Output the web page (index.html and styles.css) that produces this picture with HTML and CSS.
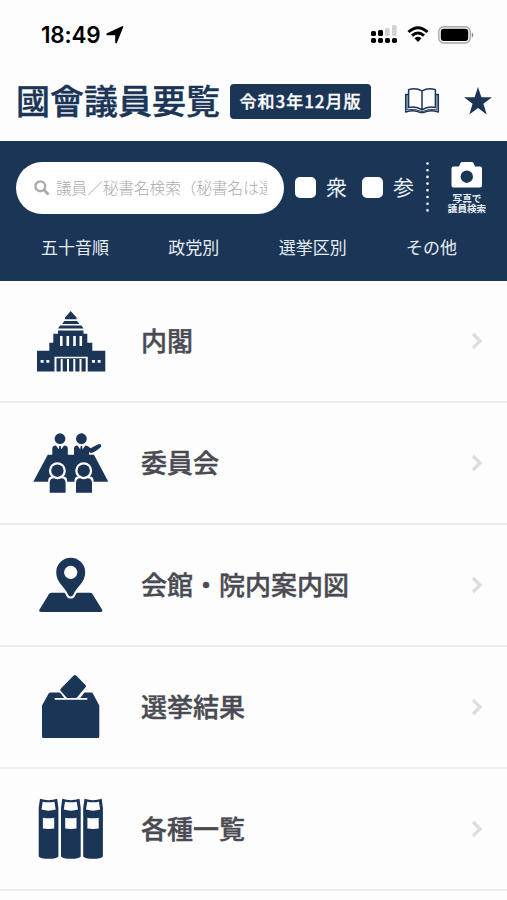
FILE: index.html
```html
<!DOCTYPE html>
<html lang="ja">
<head>
    <meta charset="UTF-8">
    <meta name="viewport" content="width=device-width, initial-scale=1.0">
    <title>國會議員要覧</title>
    <link rel="stylesheet" href="styles.css">
</head>
<body>

    <div class="status-bar">
        <span class="time">18:49</span>
        <svg class="location" width="18" height="18" viewBox="0 0 18 18"><path d="M17.300 1L10.800 17Q9.800 18 9.200 16.600V9.200H1.200Q-.4 8.400 1 7.200L16 .2Q17.800 0 17.300 1z"/></svg>
        <svg class="signal" width="27" height="19" viewBox="0 0 27 19">
            <g fill="#000">
                <rect x="0" y="6" width="5" height="5" rx="1.6"/><rect x="7" y="5" width="5" height="6" rx="1.6"/>
                <rect x="0" y="13" width="5" height="5" rx="1.8"/><rect x="7" y="13" width="5" height="5" rx="1.8"/>
                <rect x="14" y="13" width="5" height="5" rx="1.8"/><rect x="21" y="13" width="5" height="5" rx="1.8"/>
            </g>
            <g fill="#d2d2d2"><rect x="14" y="3" width="4.6" height="8" rx="1.2"/><rect x="21" y="0" width="4.6" height="11" rx="1.2"/></g>
        </svg>
        <svg class="wifi" width="22" height="17" viewBox="0 0 22 17">
            <path d="M1.5 6Q11-2.6 20.5 6M5 9.7Q11 4.4 17 9.7" fill="none" stroke="#000" stroke-width="3"/>
            <path d="M7.5 12.2Q11 9.4 14.5 12.2L11 16z"/>
        </svg>
        <svg class="battery" width="36" height="18" viewBox="0 0 36 18">
            <rect x=".8" y=".8" width="31.4" height="16.2" rx="5" fill="none" stroke="#a5a5a5" stroke-width="1.4"/>
            <rect x="2.8" y="2.8" width="27.4" height="12.2" rx="3"/>
            <path d="M33.8 6.2Q37 9 33.8 11.8z" fill="#888"/>
        </svg>
    </div>

    <div class="header">
        <h1>國會議員要覧</h1>
        <span class="edition">令和3年12月版</span>
        <svg class="book" width="36" height="28" viewBox="0 0 36 28" fill="none" stroke="#1b3557" stroke-width="1.5" stroke-linejoin="round">
            <path d="M18 3.800Q11.500.2 4.600 2.600V20.500Q12 18.600 18 22.800Q24 18.600 31.400 20.500V2.600Q24.500.2 18 3.800V22.800"/>
            <path d="M4.600 7.500H1.700V25Q10 22.300 16 25.400H20Q26 22.300 34.300 25V7.500H31.400"/>
            <path d="M3 8V22.800Q11 21 18 24.600Q25 21 33 22.800V8" stroke-width=".9"/>
        </svg>
        <svg class="star" width="28" height="28" viewBox="0 0 28 28"><path d="M14 0L17.400 10.300H28L19.400 16.700L22.700 27.500L14 21L5.300 27.500L8.600 16.700L0 10.300H10.600z"/></svg>
    </div>

    <div class="panel">
        <div class="search-row">
            <div class="search-box">
                <svg width="16" height="16" viewBox="0 0 16 16" fill="none" stroke="#aaa"><circle cx="6.300" cy="6.300" r="4.900" stroke-width="2.400"/><path d="M10 10L14.600 14.600" stroke-width="2.800"/></svg>
                <span class="placeholder">議員／秘書名検索（秘書名は選</span>
            </div>
            <span class="check"></span><span class="house">衆</span>
            <span class="check"></span><span class="house">参</span>
            <svg class="dots" width="3" height="52" viewBox="0 0 3 52"><path d="M1.500 1.500V50" stroke="#fff" stroke-width="2.600" stroke-linecap="round" stroke-dasharray="0 6.700"/></svg>
            <div class="photo">
                <svg width="32" height="26" viewBox="0 0 32 26"><path fill="#fff" fill-rule="evenodd" d="M2.500 4.500H8L9.400 1.300Q10 0 11.500 0H20.500Q22 0 22.600 1.300L24 4.500H29Q31 4.500 31 6.500V23.500Q31 25.500 29 25.500H2.500Q.5 25.500 .5 23.500V6.500Q.5 4.500 2.500 4.500zM15.800 8.500A6.200 6.200 0 1 0 15.800 20.900A6.200 6.200 0 1 0 15.800 8.500z"/></svg>
                <span>写真で<br>議員検索</span>
            </div>
        </div>
        <div class="tabs">
            <a>五十音順</a>
            <a>政党別</a>
            <a>選挙区別</a>
            <a>その他</a>
        </div>
    </div>

    <div class="menu">
        <div class="menu-item">
            <svg class="icon" viewBox="0 0 80 72">
                <path d="M40.700 6L46.500 12.500V14.200H35V12.500zM34.500 16H47L49.500 19H32zM30 20.600H51.500L53.500 23.600H28zM28 25.400H53.500V28.700H57.300V37.700H62.300V45.700H75.300V66.500H7V45.700H19.300V37.700H23.300V28.700H28z"/>
                <g class="cut">
                    <path d="M30 31h2.600v10H30zM36.500 31h2.600v10h-2.600zM43.200 31h2.600v10h-2.600zM49.500 31h2.600v10h-2.600z"/>
                    <path d="M10.600 55h3v2.800h-3zM16.300 55h3v2.800h-3zM62 55h3v2.800h-3zM67.600 55h3v2.800h-3z"/>
                    <path d="M24.500 51.700H57.700V53.200H24.500zM24.500 52h2v15h-2zM30.700 54h2v13h-2zM37 54h2v13h-2zM43.300 54h2v13h-2zM49.500 54h2v13h-2zM55.700 52h2v15h-2z"/>
                </g>
            </svg>
            <span class="label">内閣</span>
            <svg class="arrow" viewBox="0 0 12 18"><path d="M2 2L9 9L2 16"/></svg>
        </div>
        <div class="menu-item">
            <svg class="icon" viewBox="0 0 80 72">
                <path d="M17.700 27.700H64L78.300 54.700H3.300z"/>
                <circle cx="30" cy="11.700" r="5.400"/><circle cx="51.400" cy="11.700" r="5.400"/>
                <path d="M22.300 28V21.500Q22.300 18.700 26 18.500L30 24L34 18.500Q37.800 18.700 37.800 21.500V28zM44 28V21.500Q44 18.700 47.500 18.500L51.400 24L55.400 18.500Q58 18.500 60.500 21.300L68.300 17.200Q71.500 16.700 71.300 19.500Q66 24.800 61 26L59 25V28z"/>
                <path d="M29.300 19h1.400l.8 5-1.500 3-1.500-3zM50.700 19h1.400l.8 5-1.500 3-1.500-3z"/>
                <g class="cut"><circle cx="27.400" cy="43.700" r="8.500"/><circle cx="53.700" cy="43.700" r="8.500"/><rect x="18.200" y="49.500" width="18.900" height="18" rx="4"/><rect x="44.500" y="49.500" width="19" height="18" rx="4"/></g>
                <circle cx="27.400" cy="43.700" r="6.200"/><circle cx="53.700" cy="43.700" r="6.200"/>
                <path d="M19.700 65.700V56Q19.700 51.500 24 51.300Q27.500 53 31 51.300Q35.600 51.500 35.600 56V65.700zM46 65.700V56Q46 51.500 50.300 51.300Q53.700 53 57.300 51.300Q62 51.500 62 56V65.700z"/>
            </svg>
            <span class="label">委員会</span>
            <svg class="arrow" viewBox="0 0 12 18"><path d="M2 2L9 9L2 16"/></svg>
        </div>
        <div class="menu-item">
            <svg class="icon" viewBox="0 0 80 72">
                <path d="M22 43.700H60Q61.700 43.700 62.500 45L72 60.500Q73 63 70.500 63H11Q8.500 63 9.500 60.500L19 45Q20 43.700 22 43.700z"/>
                <path class="pin" d="M40.700 47.500Q38.700 47.500 38 45.500C34.500 37.500 26.200 33.500 26.200 23.300A14.500 14.500 0 0 1 55.200 23.300C55.200 33.500 47 37.500 43.400 45.500Q42.700 47.500 40.700 47.500z"/>
                <circle class="cut" cx="40.700" cy="23.300" r="6.600"/>
            </svg>
            <span class="label">会館・院内案内図</span>
            <svg class="arrow" viewBox="0 0 12 18"><path d="M2 2L9 9L2 16"/></svg>
        </div>
        <div class="menu-item">
            <svg class="icon" viewBox="0 0 80 72">
                <path d="M21 21.500H61Q62.500 21.500 63 22.700L69.300 34.500V65.500Q69.300 67 67.800 67H13.500Q12 67 12 65.500V34.500L18.500 22.700Q19.300 21.500 21 21.500z"/>
                <path class="cut" d="M24.700 27h32.600v1.800H24.700zM28 19L45 2L59 15.500L49 28.500H35.500z"/>
                <path d="M30.700 17.700L43.700 4.500Q45 3.500 46.200 4.500L55.500 14Q56.500 15.200 55.500 16.200L46.500 27H37L30.700 20Q29.700 18.800 30.700 17.700z"/>
            </svg>
            <span class="label">選挙結果</span>
            <svg class="arrow" viewBox="0 0 12 18"><path d="M2 2L9 9L2 16"/></svg>
        </div>
        <div class="menu-item">
            <svg class="icon" viewBox="0 0 80 72">
                <defs>
                    <g id="volume">
                        <path d="M1.300 5.800Q10 8.500 18.500 5.800L19.700 15V63.500Q18 65.800 10 65.800Q1.700 65.800 0 63.500V15z"/>
                        <path class="cut" d="M4 8.700Q10 10 15.700 8.700L17 16.500Q10 18.800 2.800 16.500zM4.200 24.800Q10 25.800 15.500 24.800V35.500Q10 36.300 4.200 35.500z"/>
                    </g>
                </defs>
                <use href="#volume" x="8.700"/>
                <use href="#volume" x="31"/>
                <use href="#volume" x="53.200"/>
            </svg>
            <span class="label">各種一覧</span>
            <svg class="arrow" viewBox="0 0 12 18"><path d="M2 2L9 9L2 16"/></svg>
        </div>
    </div>

</body>
</html>
```
FILE: styles.css
```css
/* General Styles */
* {
    box-sizing: border-box;
}
body {
    margin: 0;
    height: 900px;
    overflow: hidden;
    font-family: 'Noto Sans CJK JP', sans-serif;
    background: #fdfdfe;
    color: #4a4b52;
}
svg {
    display: block;
    flex: none;
}

/* Status Bar */
.status-bar {
    display: flex;
    align-items: center;
    height: 69px;
    padding-left: 41px;
}
.time {
    width: 65px;
    font-family: Inter, sans-serif;
    font-size: 22.5px;
    font-weight: 600;
    letter-spacing: -0.2px;
    line-height: 28px;
    color: #000;
}
.signal {
    margin-left: 247px;
}
.wifi {
    margin: 0 9px 0 9px;
}

/* Header */
.header {
    display: flex;
    align-items: center;
    height: 72px;
    padding: 0 15px 8px 16px;
}
.header h1 {
    width: 214px;
    margin: 0;
    padding-bottom: 3px;
    font-size: 34px;
    line-height: 50px;
    font-weight: 500;
    color: #1b3557;
    -webkit-text-stroke: 0.4px #1b3557;
    white-space: nowrap;
}
.edition {
    width: 141px;
    height: 35px;
    background: #1b3557;
    border-radius: 4px;
    color: white;
    font-size: 17px;
    font-weight: 500;
    letter-spacing: 1px;
    line-height: 33px;
    text-align: center;
    -webkit-text-stroke: 0.3px white;
}
.book {
    margin-left: 33px;
}
.star {
    margin-left: 24px;
    fill: #1b3557;
}

/* Search Panel */
.panel {
    height: 140px;
    padding: 20px 0 0 16px;
    background: #1b3557;
    color: #e6edf3;
}
.search-row {
    display: flex;
    align-items: center;
    height: 53px;
}
.search-box {
    display: flex;
    align-items: center;
    width: 268px;
    height: 52px;
    padding: 0 17px 0 18px;
    background: white;
    border-radius: 26px;
    margin-right: 11px;
}
.placeholder {
    flex: 1;
    margin-left: 6px;
    padding-bottom: 2px;
    overflow: hidden;
    white-space: nowrap;
    font-size: 15.6px;
    font-weight: 300;
    color: #aaa;
}
.check {
    width: 21px;
    height: 21px;
    background: white;
    border-radius: 5px;
}
.house {
    width: 36px;
    margin-left: 10px;
    padding-bottom: 3px;
    font-size: 21px;
    font-weight: 400;
}
.dots {
    margin-left: -3px;
}
.photo {
    display: flex;
    flex-direction: column;
    align-items: center;
    width: 42px;
    margin-left: 17px;
    font-size: 9.6px;
    line-height: 10.5px;
    font-weight: 700;
    text-align: center;
    white-space: nowrap;
}
.photo span {
    margin-top: 5px;
}
.tabs {
    display: flex;
    justify-content: space-between;
    padding: 0 50px 0 25px;
    margin-top: 20px;
    font-size: 17px;
    line-height: 26px;
}

/* Menu */
.menu-item {
    display: flex;
    align-items: center;
    height: 122px;
    padding: 0 24px 0 30px;
    border-bottom: 2px solid #ebebec;
}
.icon {
    width: 80px;
    height: 72px;
    fill: #1b3557;
}
.cut {
    fill: #fdfdfe;
}
.pin {
    stroke: #fdfdfe;
    stroke-width: 4px;
    paint-order: stroke;
}
.label {
    flex: 1;
    margin-left: 31px;
    padding-bottom: 3px;
    font-size: 26px;
    line-height: 38px;
    font-weight: 500;
    -webkit-text-stroke: 0.4px #4a4b52;
}
.arrow {
    width: 12px;
    height: 18px;
    fill: none;
    stroke: #dedede;
    stroke-width: 3.4px;
}
```
